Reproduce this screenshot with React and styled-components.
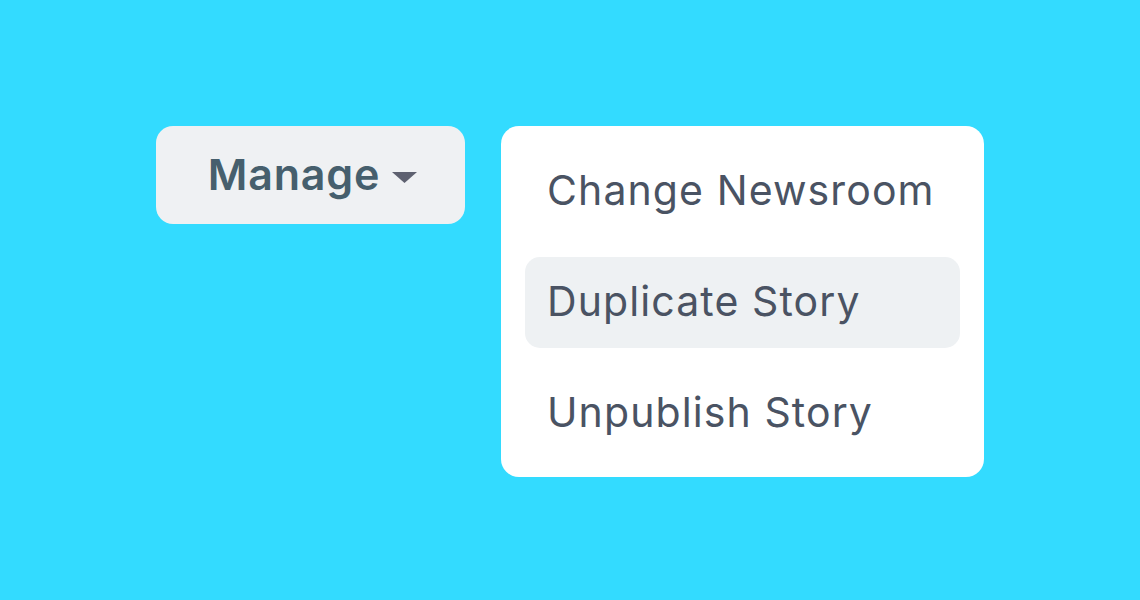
import React from "react";
import styled, { createGlobalStyle } from "styled-components";

const GlobalStyle = createGlobalStyle`
  html, body {
    margin: 0;
    padding: 0;
    background: #33dbff;
  }
  body {
    font-family: Inter, "Noto Sans", sans-serif;
  }
`;

const items = [
  { label: "Change Newsroom" },
  { label: "Duplicate Story", active: true },
  { label: "Unpublish Story" },
];

const App = () => {
  return (
    <>
      <GlobalStyle />
      <Page>
        <ManageButton type="button">
          <span>Manage</span>
          <Caret viewBox="0 0 25 11" aria-hidden="true">
            <path d="M0 0 H25 L12.5 11 Z" fill="currentColor" />
          </Caret>
        </ManageButton>

        {/* DROPDOWN MENU */}
        <Menu role="menu">
          {items.map((item) => (
            <MenuItem key={item.label} role="menuitem" $active={item.active}>
              {item.label}
            </MenuItem>
          ))}
        </Menu>
      </Page>
    </>
  );
};

// STYLED COMPONENTS
const Page = styled.div`
  min-height: 100vh;
  box-sizing: border-box;
  display: flex;
  align-items: flex-start;
  gap: 36px;
  padding: 126px 0 0 156px;
`;

const ManageButton = styled.button`
  width: 309px;
  height: 98px;
  display: flex;
  align-items: center;
  justify-content: center;
  gap: 12px;
  padding: 0 0 0 4px;
  border: none;
  border-radius: 17px;
  background: #eff1f3;
  color: #465f6d;
  font-family: Inter, sans-serif;
  font-size: 43px;
  font-weight: 600;
  letter-spacing: 0.8px;
  cursor: pointer;

  span {
    margin-top: -3px;
  }
`;

const Caret = styled.svg`
  width: 25px;
  height: 11px;
  color: #5e6170;
  margin-top: 4px;
`;

const Menu = styled.div`
  width: 483px;
  box-sizing: border-box;
  display: flex;
  flex-direction: column;
  gap: 20px;
  padding: 20px 24px 18px;
  background: #ffffff;
  border-radius: 18px;
`;

const MenuItem = styled.div`
  height: 91px;
  display: flex;
  align-items: center;
  padding: 0 22px 4px;
  box-sizing: border-box;
  border-radius: 15px;
  background: ${(p) => (p.$active ? "#eef1f3" : "transparent")};
  color: #4a5363;
  font-family: Inter, sans-serif;
  font-size: 41px;
  font-weight: 400;
  letter-spacing: 1.1px;
`;

export default App;
